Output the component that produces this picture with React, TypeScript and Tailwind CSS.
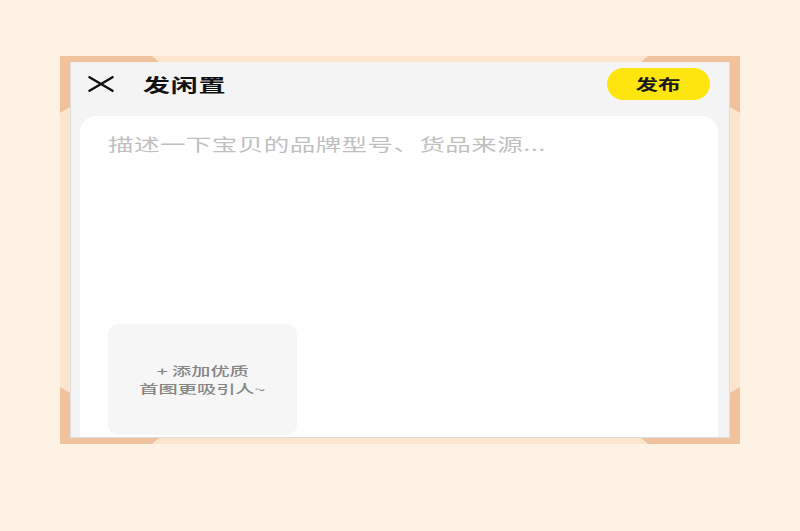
import React from "react";

function Corners() {
  return (
    <svg
      className="absolute inset-0 z-0"
      width="680"
      height="388"
      viewBox="0 0 680 388"
    >
      <polygon fill="#f0c39e" points="0,0 92,0 99,6 10,6 10,51 0,57" />
      <polygon fill="#f0c39e" points="680,0 588,0 581,6 670,6 670,51 680,57" />
      <polygon fill="#f0c39e" points="0,331 10,337 10,382 99,382 92,388 0,388" />
      <polygon fill="#f0c39e" points="680,331 670,337 670,382 581,382 588,388 680,388" />
    </svg>
  );
}

export default function App() {
  return (
    <div className="w-full h-[531px] bg-[#fdf2e3] pt-[56px] font-['Noto_Sans_CJK_SC','Noto_Sans',sans-serif]">
      <div className="relative mx-auto w-[680px] h-[388px] bg-[#fce5cf] pt-[6px] px-[10px] pb-[6px]">
        <Corners />
        <div className="relative z-10 flex h-full w-full flex-col bg-[#f4f4f4] border-x border-b border-[#dedede]">
          <div className="flex h-[44px] items-center pl-[17px] pr-[19px]">
            <svg width="26" height="16" viewBox="0 0 26 16" className="shrink-0">
              <path d="M1.5 1.2 L24.5 14.8 M24.5 1.2 L1.5 14.8" stroke="#111" strokeWidth="2.4" strokeLinecap="round" />
            </svg>
            <span className="ml-[29px] inline-block origin-left scale-x-150 text-[18px] font-bold leading-[24px] tracking-[0.5px] text-[#111]">
              发闲置
            </span>
            <button className="ml-auto flex h-[32px] w-[103px] items-center justify-center rounded-full bg-[#ffe50f]">
              <span className="inline-block scale-x-150 text-[15px] font-bold leading-[20px] text-[#1a1a1a]">
                发布
              </span>
            </button>
          </div>
          <div className="mt-[10px] ml-[9px] mr-[11px] flex flex-1 flex-col rounded-t-[16px] bg-white pl-[28px] pt-[16px]">
            <div className="h-[24px] text-[17px] leading-[24px] text-[#bfbfbf]">
              <span className="inline-block origin-left scale-x-150 tracking-[0.3px] whitespace-nowrap">
                描述一下宝贝的品牌型号、货品来源...
              </span>
            </div>
            <div className="mt-[168px] flex h-[111px] w-[189px] flex-col items-center justify-center rounded-[10px] bg-[#f6f6f6] text-[12px] font-medium leading-[17.5px] text-[#858585]">
              <span className="inline-block scale-x-[1.6] whitespace-nowrap">+ 添加优质</span>
              <span className="inline-block scale-x-[1.6] whitespace-nowrap">首图更吸引人~</span>
            </div>
          </div>
        </div>
      </div>
    </div>
  );
}
